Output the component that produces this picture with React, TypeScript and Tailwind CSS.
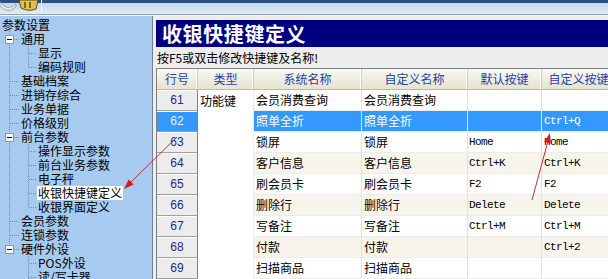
import React from "react";

const CJK = "font-['Noto_Sans_CJK_SC',sans-serif]";

type TreeItem = { text: string; level: 0 | 1 | 2; box?: boolean; selected?: boolean };

const tree: TreeItem[] = [
  { text: "参数设置", level: 0 },
  { text: "通用", level: 1, box: true },
  { text: "显示", level: 2 },
  { text: "编码规则", level: 2 },
  { text: "基础档案", level: 1 },
  { text: "进销存综合", level: 1 },
  { text: "业务单据", level: 1 },
  { text: "价格级别", level: 1 },
  { text: "前台参数", level: 1, box: true },
  { text: "操作显示参数", level: 2 },
  { text: "前台业务参数", level: 2 },
  { text: "电子秤", level: 2 },
  { text: "收银快捷键定义", level: 2, selected: true },
  { text: "收银界面定义", level: 2 },
  { text: "会员参数", level: 1 },
  { text: "连锁参数", level: 1 },
  { text: "硬件外设", level: 1, box: true },
  { text: "POS外设", level: 2 },
  { text: "读/写卡器", level: 2 },
];

type Row = { no: number; type?: string; sys: string; name: string; def: string; key: string };

const rows: Row[] = [
  { no: 61, type: "功能键", sys: "会员消费查询", name: "会员消费查询", def: "", key: "" },
  { no: 62, sys: "照单全折", name: "照单全折", def: "", key: "Ctrl+Q" },
  { no: 63, sys: "锁屏", name: "锁屏", def: "Home", key: "Home" },
  { no: 64, sys: "客户信息", name: "客户信息", def: "Ctrl+K", key: "Ctrl+K" },
  { no: 65, sys: "刷会员卡", name: "刷会员卡", def: "F2", key: "F2" },
  { no: 66, sys: "删除行", name: "删除行", def: "Delete", key: "Delete" },
  { no: 67, sys: "写备注", name: "写备注", def: "Ctrl+M", key: "Ctrl+M" },
  { no: 68, sys: "付款", name: "付款", def: "", key: "Ctrl+2" },
  { no: 69, sys: "扫描商品", name: "扫描商品", def: "", key: "" },
];

const SELECTED = 62;

function TreeLines() {
  const cy = (i: number) => 9 + 14 * i;
  const lastLevel1 = 16;
  const parts: React.ReactNode[] = [];
  // level 1 trunk
  parts.push(<line key="trunk" x1={9.5} y1={cy(0) + 6} x2={9.5} y2={cy(lastLevel1)} />);
  tree.forEach((it, i) => {
    if (it.level === 1) {
      parts.push(<line key={"h" + i} x1={it.box ? 14 : 10} y1={cy(i) + 0.5} x2={19} y2={cy(i) + 0.5} />);
    }
    if (it.level === 2) {
      parts.push(<line key={"h" + i} x1={29} y1={cy(i) + 0.5} x2={37} y2={cy(i) + 0.5} />);
    }
    if (it.box) {
      let last = i;
      for (let j = i + 1; j < tree.length && tree[j].level === 2; j++) last = j;
      const end = last === tree.length - 1 ? 270 : cy(last);
      parts.push(<line key={"v" + i} x1={28.5} y1={cy(i) + 1} x2={28.5} y2={end} />);
    }
  });
  return (
    <svg className="absolute left-0 top-0" width={153} height={263}>
      <g stroke="#7b8aa0" strokeWidth={1} strokeDasharray="1 1" shapeRendering="crispEdges">
        {parts}
      </g>
      {tree.map((it, i) =>
        it.box ? (
          <g key={"b" + i} shapeRendering="crispEdges">
            <rect x={5.5} y={cy(i) - 3.5} width={8} height={8} fill="#fff" stroke="#7f9db9" />
            <line x1={7} y1={cy(i) + 0.5} x2={12} y2={cy(i) + 0.5} stroke="#000" />
          </g>
        ) : null
      )}
    </svg>
  );
}

function Tree() {
  return (
    <div className="relative w-[153px] h-full shrink-0 bg-[#a6caf0] border-r border-[#6f7f96] overflow-hidden pt-[2px]">
      <TreeLines />
      <div className="relative">
        {tree.map((it) => (
          <div
            key={it.text}
            className={`h-[14px] flex items-center ${
              it.level === 0 ? "pl-[1px]" : it.level === 1 ? "pl-[20px]" : "pl-[37px]"
            }`}
          >
            <span
              className={`inline-block h-[14px] leading-[14px] px-[1px] whitespace-nowrap text-black ${
                it.selected ? "bg-white" : ""
              }`}
            >
              {it.text}
            </span>
          </div>
        ))}
      </div>
    </div>
  );
}

function HeaderCell({ w, children }: { w: string; children: React.ReactNode }) {
  return (
    <div
      className={`${w} shrink-0 h-full flex items-center justify-center border-r border-[#d6d2bd] shadow-[inset_-1px_0_0_#fff] text-[#2343a8] whitespace-nowrap`}
    >
      {children}
    </div>
  );
}

function Grid() {
  return (
    <div className="border-t border-l border-[#7f7f7f] bg-white overflow-hidden">
      <div className="flex h-[21px] bg-gradient-to-b from-[#f8f8f2] to-[#e6e3cf] border-b border-[#bdb9a0]">
        <HeaderCell w="w-[41px]">行号</HeaderCell>
        <HeaderCell w="w-[56px]">类型</HeaderCell>
        <HeaderCell w="w-[108px]">系统名称</HeaderCell>
        <HeaderCell w="w-[106px]">自定义名称</HeaderCell>
        <HeaderCell w="w-[74px]">默认按键</HeaderCell>
        <HeaderCell w="w-[74px]">自定义按键</HeaderCell>
      </div>
      {rows.map((r) => {
        const sel = r.no === SELECTED;
        const bg = sel ? "bg-[#3399ff] text-white" : r.no % 2 === 0 ? "bg-[#f7f5eb]" : "bg-white";
        const cell = `h-full shrink-0 flex items-center border-r border-[#e2e2e2] whitespace-nowrap overflow-hidden ${bg}`;
        const mono = "font-['Liberation_Mono',monospace] text-[11px] tracking-[-0.6px]";
        return (
          <div key={r.no} className="flex h-[21px]">
            <div
              className={`w-[41px] shrink-0 h-full flex items-center justify-center border-r border-[#7f7f7f] border-b border-b-[#a0a0a0] shadow-[inset_0_1px_0_#fff] font-['Liberation_Sans',sans-serif] text-[12px] ${
                sel ? "bg-[#3399ff] text-[#e8f0ff]" : "bg-[#ececec] text-[#1e2a8c]"
              }`}
            >
              {r.no}
            </div>
            <div className="w-[56px] shrink-0 h-full flex items-center pl-[2px] bg-white border-r border-[#ececec] whitespace-nowrap">
              {r.type}
            </div>
            <div className={`${cell} w-[108px] pl-[2px] border-b border-b-[#ececec]`}>{r.sys}</div>
            <div className={`${cell} w-[106px] pl-[2px] border-b border-b-[#ececec]`}>{r.name}</div>
            <div className={`${cell} w-[74px] pl-[1px] border-b border-b-[#ececec] ${mono}`}>{r.def}</div>
            <div className={`${cell} w-[74px] pl-[2px] border-b border-b-[#ececec] ${mono}`}>{r.key}</div>
          </div>
        );
      })}
    </div>
  );
}

function TopBar() {
  return (
    <div className="relative h-[16px]">
      <div className="h-[3px] bg-[#2d4f82]" />
      <div className="h-[11px] bg-gradient-to-b from-[#c4d8f2] to-[#e0ebf8]" />
      <div className="h-[1px] bg-[#9aa3ad]" />
      <div className="h-[1px] bg-[#f4f4f4]" />
      <svg className="absolute left-0 top-0" width={44} height={13}>
        <path d="M0 2 Q8 12 16 4 L16 7 Q8 15 0 6 Z" fill="#e8e8e8" stroke="#9a9a9a" strokeWidth={0.8} />
        <path d="M19 0 L38 0 L36 9 Q28 12 21 8 Z" fill="#e2c24a" stroke="#5a4a1a" strokeWidth={1} />
        <path d="M25 2 L25 8 M30 2 L30 8" stroke="#5a4a1a" strokeWidth={1.5} />
        <line x1={41.5} y1={0} x2={41.5} y2={12} stroke="#fff" />
      </svg>
    </div>
  );
}

function Arrows() {
  return (
    <svg className="absolute left-0 top-0 pointer-events-none" width={608} height={279}>
      <line x1={177} y1={137} x2={129} y2={184} stroke="#c8283c" strokeWidth={1} />
      <polygon points="124,189 133.6,184.5 128.7,179.5" fill="#e0141e" />
      <line x1={532} y1={200} x2={548} y2={141} stroke="#c8283c" strokeWidth={1} />
      <polygon points="550,133 550.8,143.6 544,141.7" fill="#e0141e" />
    </svg>
  );
}

export default function App() {
  return (
    <div className={`relative w-[608px] h-[279px] overflow-hidden bg-[#ededed] text-[12px] text-black ${CJK}`}>
      <TopBar />
      <div className="flex h-[263px]">
        <Tree />
        <div className="flex-1 min-w-0 pl-[3px] pt-[4px] flex flex-col">
          <div className="h-[27px] bg-[#000080] flex items-center pl-[6px] text-white text-[20px] font-bold tracking-[0.6px] leading-none whitespace-nowrap">
            收银快捷键定义
          </div>
          <div className="h-[21px] flex items-center pl-[1px] pt-[1px] whitespace-nowrap">按F5或双击修改快捷键及名称!</div>
          <Grid />
        </div>
      </div>
      <Arrows />
    </div>
  );
}
